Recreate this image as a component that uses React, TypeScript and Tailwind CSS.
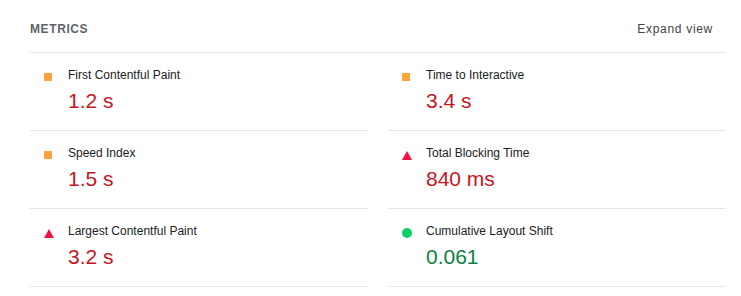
import React from "react";

type Kind = "average" | "fail" | "pass";

const METRICS: { label: string; value: string; kind: Kind }[] = [
	{ label: "First Contentful Paint", value: "1.2 s", kind: "average" },
	{ label: "Time to Interactive", value: "3.4 s", kind: "average" },
	{ label: "Speed Index", value: "1.5 s", kind: "average" },
	{ label: "Total Blocking Time", value: "840 ms", kind: "fail" },
	{ label: "Largest Contentful Paint", value: "3.2 s", kind: "fail" },
	{ label: "Cumulative Layout Shift", value: "0.061", kind: "pass" },
];

function Icon({ kind }: { kind: Kind }) {
	if (kind === "average") {
		return <div className="w-2 h-2 bg-[#ffa33a]" />;
	}
	if (kind === "fail") {
		return (
			<svg width="10" height="9" viewBox="0 0 10 9" className="block">
				<polygon points="5,0 10,9 0,9" fill="#f5103f" />
			</svg>
		);
	}
	return <div className="w-[10px] h-[10px] rounded-full bg-[#0cce6b]" />;
}

export default function App() {
	return (
		<div
			className="w-[741px] h-[296px] bg-white pl-[30px] pr-[15px]"
			style={{ fontFamily: '"Liberation Sans", Arial, sans-serif' }}
		>
			{/* Header */}
			<div className="flex items-center justify-between pt-5 pb-[14px] border-b border-[#e6e6e6]">
				<span className="text-[12px] leading-[18px] font-bold tracking-[0.6px] text-[#5f6368]">
					METRICS
				</span>
				<span className="text-[12px] leading-[18px] tracking-[0.7px] text-[#424242] mr-[13px]">
					Expand view
				</span>
			</div>

			{/* Metric grid */}
			<div className="grid grid-cols-2 gap-x-5">
				{METRICS.map((m) => (
					<div
						key={m.label}
						className="relative border-b border-[#e6e6e6] pt-[13px] pb-[17px] pl-[38px]"
					>
						<div className="absolute left-[14px] top-[19px] w-[10px] h-[10px] flex items-center">
							<Icon kind={m.kind} />
						</div>
						<div className="text-[12px] leading-[18px] text-[#212121]">
							{m.label}
						</div>
						<div
							className={`mt-[5px] text-[21px] leading-[24px] ${
								m.kind === "pass" ? "text-[#0b8043]" : "text-[#c5161f]"
							}`}
						>
							{m.value}
						</div>
					</div>
				))}
			</div>
		</div>
	);
}
